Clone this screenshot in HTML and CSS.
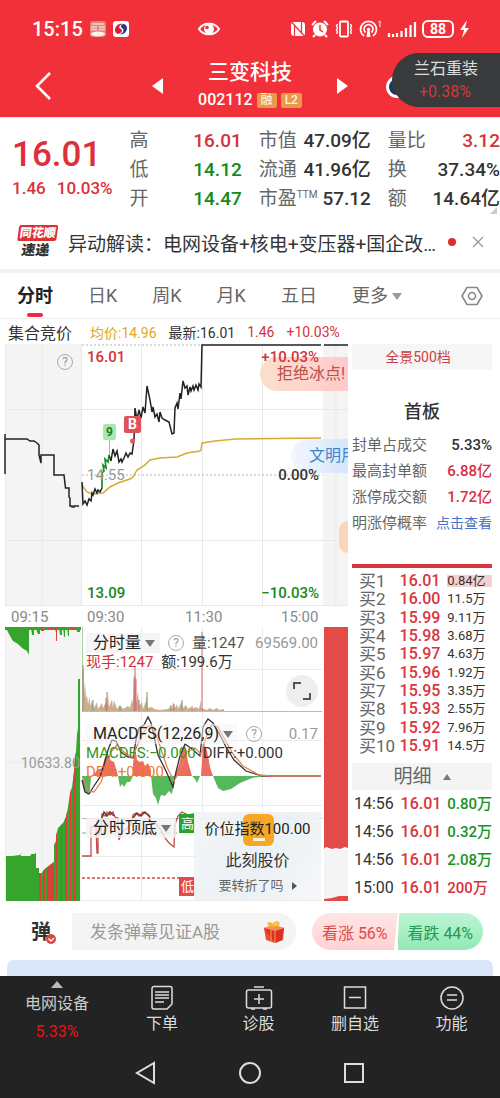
FILE: index.html
```html
<!DOCTYPE html>
<html lang="zh-CN">
<head>
<meta charset="utf-8">
<meta name="viewport" content="width=device-width, initial-scale=1">
<title>三变科技 002112</title>
<link rel="stylesheet" href="styles.css">
</head>
<body>
<header class="top">
  <div class="status">
    <div class="status-left">
      <span class="clock">15:15</span>
      <svg width="16" height="16" viewBox="0 0 16 16"><rect width="16" height="16" rx="3" fill="#d98a80"/><path d="M2 3h12M1 6h6M9 6h6M1 8.500h6M9 8.500h6" stroke="#f7d3c8" stroke-width="1.300"/><ellipse cx="8" cy="13" rx="7" ry="2.600" fill="#fff0df"/></svg>
      <svg width="16" height="16" viewBox="0 0 16 16"><rect width="16" height="16" rx="3" fill="#fff"/><path d="M2 9C2 5 6 2 10 3C6 4 5 7 8 8C10 9 9 12 5 13C3 12 2 11 2 9z" fill="#d5203c"/><path d="M14 7c0 4-4 7-7 6 3-1 5-4 2-6C7 6 8 3 11 3c2 1 3 2 3 4z" fill="#223a8c"/></svg>
    </div>
    <svg class="eye" width="24" height="18" viewBox="0 0 24 18"><path d="M2 9C6 2 18 2 22 9C18 16 6 16 2 9z" fill="none" stroke="#fff" stroke-width="2"/><circle cx="12" cy="9" r="5" fill="#fff"/><circle cx="10" cy="7.500" r="1.800" fill="#f23039"/></svg>
    <div class="status-right">
      <svg width="16" height="16" viewBox="0 0 16 16"><rect x="1" y="1" width="14" height="14" rx="3" fill="#fff"/><path d="M4.500 15V4.500L11.500 12V1M2 1.500L14 14.500" fill="none" stroke="#f23039" stroke-width="1.200"/></svg>
      <svg width="18" height="18" viewBox="0 0 18 18"><circle cx="9" cy="9.500" r="7" fill="#fff"/><path d="M1 5l4-4M17 5l-4-4M4 15l-2 2M14 15l2 2" stroke="#fff" stroke-width="2"/><path d="M9 5v5l3 2" fill="none" stroke="#f23039" stroke-width="1.500"/></svg>
      <svg width="20" height="18" viewBox="0 0 20 18"><rect x="6" y="1.500" width="8" height="15" rx="1" fill="none" stroke="#fff" stroke-width="1.800"/><path d="M3.500 4l-1 2 1 2-1 2 1 2-1 2M16.500 4l1 2-1 2 1 2-1 2 1 2" fill="none" stroke="#fff" stroke-width="1.400"/></svg>
      <svg width="23" height="18" viewBox="0 0 23 18"><g fill="none" stroke="#fff" stroke-width="1.700"><path d="M5 16A8 8 0 1 1 14 16"/><path d="M6.500 12.500A4.500 4.500 0 1 1 12.500 12.500"/></g><circle cx="9.500" cy="9.500" r="1.700" fill="#fff"/><path d="M8.500 10h2l1 7h-4z" fill="#fff"/><path d="M19.500 2l1.500-1v6" fill="none" stroke="#fff"/></svg>
      <svg width="30" height="17" viewBox="0 0 30 17"><path d="M2 16v-4M6 16v-3M10 16v-4M14.500 16V10M19 16V7M23.500 16V4M28 16V1" stroke="#fff" stroke-width="2.200"/></svg>
      <span class="battery">88</span>
      <svg width="11" height="18" viewBox="0 0 11 18"><path d="M8 0L1 10h4L3 18l7-10H6z" fill="#fff"/></svg>
    </div>
  </div>
  <div class="titlebar">
    <button class="back" aria-label="返回"><svg width="18" height="30" viewBox="0 0 18 30"><path d="M16 2L3 15l13 13" fill="none" stroke="#fff" stroke-width="2.600"/></svg></button>
    <button class="step" aria-label="上一只"><svg width="12" height="16" viewBox="0 0 12 16"><path d="M11 0v16L0 8z" fill="#fff"/></svg></button>
    <div class="stock">
      <h1>三变科技</h1>
      <div class="code">002112 <span class="tag">融</span><span class="tag">L2</span></div>
    </div>
    <button class="step" aria-label="下一只"><svg width="12" height="16" viewBox="0 0 12 16"><path d="M1 0v16L12 8z" fill="#fff"/></svg></button>
  </div>
  <i class="avatar"></i>
  <a class="float-pill" href="#"><span>兰石重装</span><span class="pill-rate">+0.38%</span></a>
</header>

<section class="quote">
  <div class="last"><strong>16.01</strong><div class="change"><span>1.46</span><span>10.03%</span></div></div>
  <dl><div><dt>高</dt><dd class="up">16.01</dd></div><div><dt>低</dt><dd class="down">14.12</dd></div><div><dt>开</dt><dd class="down">14.47</dd></div></dl>
  <dl><div><dt>市值</dt><dd>47.09亿</dd></div><div><dt>流通</dt><dd>41.96亿</dd></div><div><dt>市盈<sup>TTM</sup></dt><dd>57.12</dd></div></dl>
  <dl><div><dt>量比</dt><dd class="up">3.12</dd></div><div><dt>换</dt><dd>37.34%</dd></div><div><dt>额</dt><dd>14.64亿</dd></div></dl>
  <i class="corner"></i>
</section>

<section class="news">
  <div class="news-logo"><b>同花顺</b><em>速递</em></div>
  <p>异动解读：电网设备+核电+变压器+国企改革</p>
  <i class="dot"></i>
  <button aria-label="关闭"><svg width="12" height="12" viewBox="0 0 12 12"><path d="M1 1l10 10M11 1L1 11" stroke="#999" stroke-width="1.300"/></svg></button>
</section>

<nav class="tabs">
  <button class="active">分时</button><button>日K</button><button>周K</button><button>月K</button><button>五日</button><button>更多<i class="caret"></i></button>
  <button class="gear" aria-label="设置"><svg width="22" height="20" viewBox="0 0 22 20"><path d="M6 1.500h10L21 10l-5 8.500H6L1 10z" fill="none" stroke="#888" stroke-width="1.600" stroke-linejoin="round"/><circle cx="11" cy="10" r="3.500" fill="none" stroke="#888" stroke-width="1.600"/></svg></button>
</nav>

<div class="ticker"><b>集合竞价</b><span class="avg">均价:14.96</span><span>最新:16.01</span><span class="up">1.46</span><span class="up">+10.03%</span></div>

<main class="board">
  <div class="charts">
    <div class="price">
      <svg class="plot" viewBox="0 0 350 262" preserveAspectRatio="none">
        <path d="M5 0h76v262H5zM323 0h25v262h-25z" fill="#f4f4f5"/>
        <path d="M5 65.500H348M5 196.500H348M5 261.500H348M5.500 0V262M42 0V262M81.500 0V262M141.500 0V262M202.500 0V262M262.500 0V262M336 0V262" stroke="#e9e9eb" fill="none"/>
        <path d="M82 1H202M82 131H323" stroke="#b5b5b5" stroke-dasharray="2 2"/>
        <path d="M82 140L84 144L87 148L92 150L103 149L110 143L118 139L130 135L133 133L137 126L145 121L150 116L160 114L177 113L187 109L200 107L201 106L202 99L215 97L235 95L321 94" fill="none" stroke="#d8a933" stroke-width="1.500"/>
        <path d="M5 130V90V95H27L30 97L34 97L37 99L39 101V111L41 119V111H54V131H64L65.500 144H69V153L70 154V162H72V163H74V162H79" fill="none" stroke="#222" stroke-width="1.500"/>
        <path d="M82 138L83 160L85 157L87 161L89 155L91 157L92 149L93 151L95 145L97 149L98 146L100 148L102 144M109 111L111 117L113 105L115 112L117 107L119 118L121 115L122 118L124 114L126 109L128 113L130 109L132 110L134 96L135 64L137 76L139 66L141 74L143 63L145 69L147 42L150 56L152 68L153 63L155 73L157 70L159 78L160 68L162 74L165 76L169 78L172 90L174 89L175 64L177 59L178 65L180 49L181 55L183 37L185 44L187 42L188 51L190 43L191 47L193 42L194 46L196 41L198 46L199 40L201 43L202 1H321M324 1H348" fill="none" stroke="#222" stroke-width="1.500"/>
        <path d="M102 144V129L104 127L103 121L106 124L105 115L108 118L109 111" fill="none" stroke="#12901d" stroke-width="1.700"/>
        <path d="M109.500 94V111" stroke="#8fce95"/><circle cx="132.500" cy="97" r="2.500" fill="#e25762"/>
      </svg>
      <span class="help price-help">?</span>
      <span class="bullet bullet-red">拒绝冰点!</span><span class="bullet bullet-blue">文明用</span><span class="bullet bullet-orange"></span>
      <div class="scale scale-left"><span class="up">16.01</span><span class="mid">14.55</span><span class="down">13.09</span></div>
      <div class="scale scale-right"><span class="up">+10.03%</span><span>0.00%</span><span class="down">−10.03%</span></div>
      <span class="pin pin-nine">9</span><span class="pin pin-buy">B</span>
    </div>
    <div class="hours"><span>09:15</span><span>09:30</span><span>11:30</span><span>15:00</span></div>
    <div class="lower">
      <svg class="plot" viewBox="0 0 350 274" preserveAspectRatio="none">
        <defs><clipPath id="auction"><path d="M6 274V229H12L20 228V226L21 229H30V228L31 229V227H35V226H36V241H39V246H41V247L43 244L46 241L50 238L54 235V218L56 214V209L58 201L63 196L66 190L68 180L70 166L72 160L74 145L75 130L76 125L77 107L78 101L78 52H80V274z"/></clipPath></defs>
        <path d="M5 0h76v274H5z" fill="#f4f4f5"/><path d="M5.500 0V274M42.500 0V274M141.500 0V274M202.500 0V274M262.500 0V274M82 42.500H322M5 135H81M82 113.500H322M82 178.500H322M82 229.500H322M5 273.500H322" fill="none" stroke="#ececee"/>
        <path d="M82 84.500H322M82 191.500H322" stroke="#bbb"/>
        <path d="M5 0H81V3H5zM6 1H29V28L27 24L22 21L18 17L13 14L10 9zM31 0h3v8h-2zM35 0h5v7h-2zM59 0h3v8h-2zM63 0h2v10h-1zM67 0h2v9h-1zM76 0h4v5h-3z" fill="#36a52b"/><path d="M41 0h3v4h-3zM48 0h5v3h-5zM54 0h3v14h-1v-9zM70 0h5v3h-5z" fill="#dc453f"/>
        <g clip-path="url(#auction)"><path d="M5 0H81V274H5z" fill="#36a52b"/><path d="M39 200h2v74h-2zM43 200h3v74h-3zM47 200h7v74h-7zM56 180h1v94h-1zM61 180h1v94h-1zM65 170h2v104h-2zM70 150h1v124h-1zM73 110h3v164h-3z" fill="#e33a3c"/><path d="M45.500 200V274M50 200V274" stroke="#a66b30" stroke-width=".7"/></g>
        <path d="M82.500 0V84" stroke="#a5d3a0"/>
        <path d="M82 84V40H83L84 45V66L85 55L86 72L87 68L88 77L90 69V79L92 73L94 81L97 75L98 82L102 76L103 81L106 75V70L107 79L108 65L109 80L112 72L113 81L114 73L117 82L120 78L123 82L128 79L130 81L132 72L133 77L134 58L135 44L136 56V77L138 64L139 79L142 75L143 82L146 74L147 68L148 81L152 80L154 82L160 83L168 82L171 79L172 82L173 75L175 81L177 77L178 82L182 74L183 81L186 78L188 82L190 80L192 82L196 80L199 82L201 73V84V81L207 83L210 81L213 83L217 81L219 83L224 82V84z" fill="#caae90"/><path d="M83 84V38M93 84V73M107 84V65M120 84V79M147 84V65M171 84V78M182 84V73" stroke="#79a163"/><path d="M106 84V71M134 84V50M135 84V40M136 84V52M139 84V73M174 84V77M192 84V79M202 84V5" stroke="#cd6a68"/>
        <path d="M93 149L97 143L102 141L105 130L108 126L110 133L114 135L117 145L118 149zM133 149V137L135 120L137 133L140 135L143 134L145 139L148 136L151 143V149zM175 149L179 138L183 120L185 118L188 135L192 149zM201 149L203 115L207 124L210 140L213 149z" fill="#ed6c60"/>
        <path d="M82 149L84 163L88 168L90 163L91 149zM118 149L120 160L122 157L124 160L127 155L130 155L133 149zM151 149L153 167L156 171L158 178L161 168L165 169L169 164L172 167L175 149zM192 149L195 152L197 156L200 149zM213 149L218 161L223 164L231 162L240 156L252 151L264 149z" fill="#55b95b"/>
        <path d="M82 153L85 165L89 167L94 159L100 150L104 138L108 123L112 113L116 114L121 125L128 130L133 131L136 113L139 101L144 98L148 90L151 96L154 109L158 128L166 144L173 160L176 145L180 129L185 117L192 122L200 129L203 100L208 92L213 96L219 106L226 120L234 133L246 144L262 149H321" fill="none" stroke="#333" stroke-width="1.300"/>
        <path d="M83 150L88 164L94 165L101 155L106 141L111 125L117 118L124 125L132 131L137 119L142 108L148 99L153 100L160 119L167 140L174 154L180 144L187 125L195 121L201 127L206 110L212 98L218 100L225 113L233 127L243 139L259 148L271 149H321" fill="none" stroke="#e48159" stroke-width="1.300"/>
        <path d="M82 206H180" stroke="#64ba67" stroke-dasharray="4 3"/><path d="M82 251H180" stroke="#d34c50" stroke-width="1.300" stroke-dasharray="3 2"/>
        <path d="M82 229H91V200L95 198L96 201L97 226H98V208L101 205L102 187L105 189L107 185L110 188L113 185L115 190L118 191L119 213L122 205L125 203L131 198L133 188L136 186L139 189L143 185L149 188L151 195L155 195L160 202L165 211L169 216L174 220L175 197L178 189L182 185L188 188L194 187" fill="none" stroke="#c44b4b" stroke-width="1.300"/><path d="M102 191L104 185L107 189L110 185L114 189M133 191L137 186L141 189L145 185L150 190" fill="none" stroke="#713636" stroke-width="1.500"/><path d="M102 191H116L117 207L106 205zM133 191H151V204L137 203z" fill="#f5a6a6" opacity=".45"/>
        <path d="M324 0H348V221L345 220L340 222L336 221L332 222L326 220L324 222z" fill="#e34b48"/><path d="M324 222H348V273H324z" fill="#f4f4f5"/><path d="M324 272L332 271L339 269H348V274H324z" fill="#e34b48"/>
      </svg>
      <div class="auction-label">10633.80</div>
      <div class="panels">
        <section class="volume">
          <div class="line"><button class="metric">分时量<i class="caret"></i></button><span class="help">?</span><span class="gray-dark">量:1247</span><span class="axis">69569.00</span></div>
          <div class="line second"><span class="up">现手:1247</span><span>额:199.6万</span></div>
          <button class="expand" aria-label="展开"><svg width="18" height="18" viewBox="0 0 18 18"><path d="M1 7V1h7M17 11v6h-7" fill="none" stroke="#555" stroke-width="2"/></svg></button>
        </section>
        <section class="macd">
          <div class="line"><button class="metric">MACDFS(12,26,9)<i class="caret"></i></button><span class="help">?</span><span class="axis">0.17</span></div>
          <div class="macd-values"><span class="green">MACDFS:−0.000</span><span>DIFF:+0.000</span></div>
          <div class="orange">DEA:+0.000</div>
        </section>
        <section class="extremes">
          <button class="metric">分时顶底<i class="caret"></i></button>
          <i class="flag flag-high">高</i><i class="flag flag-low">低</i>
          <a class="popup" href="#"><i class="popup-icon"></i><span class="index">价位指数100.00</span><b>此刻股价</b><small>要转折了吗<i class="play"></i></small></a>
        </section>
      </div>
    </div>
  </div>

  <aside class="depth">
    <a class="all-depth" href="#">全景500档</a>
    <h2>首板</h2>
    <dl class="seal"><div><dt>封单占成交</dt><dd>5.33%</dd></div><div><dt>最高封单额</dt><dd class="red">6.88亿</dd></div><div><dt>涨停成交额</dt><dd class="red">1.72亿</dd></div><div><dt>明涨停概率</dt><dd><a href="#">点击查看</a></dd></div></dl>
    <table class="bids">
      <tr class="first"><th scope="row">买1</th><td>16.01</td><td>0.84亿</td></tr><tr><th scope="row">买2</th><td>16.00</td><td>11.5万</td></tr><tr><th scope="row">买3</th><td>15.99</td><td>9.11万</td></tr><tr><th scope="row">买4</th><td>15.98</td><td>3.68万</td></tr><tr><th scope="row">买5</th><td>15.97</td><td>4.63万</td></tr><tr><th scope="row">买6</th><td>15.96</td><td>1.92万</td></tr><tr><th scope="row">买7</th><td>15.95</td><td>3.35万</td></tr><tr><th scope="row">买8</th><td>15.93</td><td>2.55万</td></tr><tr><th scope="row">买9</th><td>15.92</td><td>7.96万</td></tr><tr><th scope="row">买10</th><td>15.91</td><td>14.5万</td></tr>
    </table>
    <button class="detail">明细<i class="caret-up"></i></button>
    <table class="trades">
      <tr><td>14:56</td><td>16.01</td><td class="down">0.80万</td></tr><tr><td>14:56</td><td>16.01</td><td class="down">0.32万</td></tr><tr><td>14:56</td><td>16.01</td><td class="down">2.08万</td></tr><tr><td>15:00</td><td>16.01</td><td class="up">200万</td></tr>
    </table>
  </aside>
</main>

<section class="social">
  <button class="danmu" aria-label="弹幕">弹<svg width="10" height="10" viewBox="0 0 10 10"><circle cx="5" cy="5" r="5" fill="#d94642"/><path d="M2.500 4.500L5 7l3-3" fill="none" stroke="#fff" stroke-width="1.300"/></svg></button>
  <div class="compose"><input type="text" placeholder="发条弹幕见证A股" aria-label="发条弹幕"><svg width="22" height="24" viewBox="0 0 22 24"><path d="M1 8l10-3 10 3-1 12-8 3-9-3z" fill="#ed4b34"/><path d="M1 8l11 3 9-3-2 12-7 3z" fill="#d83225"/><path d="M1 8l10-3 10 3-9 3z" fill="#fb8c5c"/><path d="M10 6C4 6 4 0 10 5c4-6 10 0 1 1" fill="none" stroke="#f5b738" stroke-width="2"/><path d="M8 10v11M12 11v12" stroke="#f8a23e"/></svg></div>
  <div class="votes"><button class="vote-up">看涨 56%</button><button class="vote-down">看跌 44%</button></div>
</section>
<div class="card-peek"></div>

<footer class="bottom">
  <nav class="actions">
    <a class="sector" href="#"><i class="sector-caret"></i><span>电网设备</span><span class="sector-rate">5.33%</span></a>
    <a href="#"><svg width="24" height="26" viewBox="0 0 24 26"><path d="M4 1.500h16a2 2 0 0 1 2 2V19l-5 5H4a2 2 0 0 1-2-2V3.500a2 2 0 0 1 2-2zM5 7h14M5 10h14M5 13h14M5 17h9"/></svg>下单</a>
    <a href="#"><svg width="28" height="26" viewBox="0 0 28 26"><rect x="1.500" y="5" width="25" height="18" rx="2"/><path d="M9 2h10M14 9v10M9 14h10M6 24h4M18 24h4"/></svg>诊股</a>
    <a href="#"><svg width="24" height="26" viewBox="0 0 24 26"><path d="M1.500 2h21v21h-21zM6 12.500h12"/></svg>删自选</a>
    <a href="#"><svg width="26" height="26" viewBox="0 0 26 26"><circle cx="13" cy="13" r="11"/><path d="M8 10h10M8 15h10"/></svg>功能</a>
  </nav>
  <nav class="system">
    <button aria-label="后退"><svg width="24" height="24" viewBox="0 0 24 24"><path d="M20 2v20L3 12z"/></svg></button>
    <button aria-label="主屏幕"><svg width="24" height="24" viewBox="0 0 24 24"><circle cx="12" cy="12" r="10"/></svg></button>
    <button aria-label="最近任务"><svg width="24" height="24" viewBox="0 0 24 24"><rect x="3" y="3" width="18" height="18"/></svg></button>
  </nav>
</footer>
</body>
</html>
```
FILE: styles.css
```css
* { box-sizing: border-box; }
body { margin: 0; background: #fff; color: #333; font-family: Roboto, "Noto Sans CJK SC", sans-serif; font-size: 16px; overflow-x: hidden; }
button { border: 0; padding: 0; background: none; color: inherit; font: inherit; }
a { color: inherit; text-decoration: none; }
h1, h2, p, dl, dd { margin: 0; }
i, em { font-style: normal; }
svg { display: block; flex: none; }
.up { color: #d5313a; }
.down { color: #128a1c; }

.top { position: relative; height: 117px; background: #f23039; color: #fff; }
.status { display: grid; grid-template-columns: auto 1fr auto; align-items: center; height: 58px; padding: 0 30px 0 32px; }
.status-left, .status-right { display: flex; align-items: center; gap: 7px; }
.status-right { justify-content: flex-end; gap: 5px; }
.clock { font-size: 20px; font-weight: 500; }
.eye { justify-self: center; }
.battery { border: 2px solid #fff; border-radius: 6px; width: 32px; height: 18px; line-height: 14px; text-align: center; font-size: 14px; font-weight: 700; }
.titlebar { display: grid; grid-template-columns: 84fr 82fr 168fr 166fr; align-items: center; height: 56px; }
.back { justify-self: start; padding-left: 34px; }
.step { justify-self: end; padding-right: 2px; }
.stock { text-align: center; }
.stock + .step { justify-self: start; padding: 0 0 0 2px; }
.stock h1 { font-size: 21px; line-height: 28px; font-weight: 500; }
.code { display: flex; justify-content: center; align-items: center; gap: 4px; font-size: 16px; line-height: 28px; font-weight: 500; }
.tag { background: #e79a4c; border-radius: 2px; padding: 0 4px; line-height: 15px; font-size: 12px; color: #fff1dc; }
.avatar { position: absolute; right: 84px; top: 76px; width: 30px; height: 22px; border: 3px solid #fff; border-radius: 12px; background: #173b60; }
.float-pill { position: absolute; right: 0; top: 53px; width: 108px; height: 54px; padding-left: 22px; border-radius: 27px 0 0 27px; background: #383a3b; display: flex; flex-direction: column; justify-content: center; font-size: 16px; line-height: 23px; color: #ddd; }
.pill-rate { color: #d9363d; padding-left: 5px; }

.quote { position: relative; display: grid; grid-template-columns: 101fr 112fr 112fr 112fr; gap: 17px; height: 98px; padding: 8px 0 0 10px; border-top: 1px solid #fde8e8; }
.last { color: #dd3038; white-space: nowrap; padding: 9px 0 0 2px; }
.last strong { display: block; font-size: 35px; line-height: 40px; font-weight: 500; }
.change { display: flex; gap: 11px; font-size: 17px; line-height: 26px; font-weight: 500; }
.quote dl > div { display: flex; justify-content: space-between; line-height: 29px; font-size: 19px; white-space: nowrap; }
.quote dt { color: #666; }
.quote dd { font-weight: 500; }
.quote sup { font-size: 10px; line-height: 0; }
.corner { position: absolute; right: 3px; bottom: 1px; border-left: 7px solid transparent; border-bottom: 7px solid #ccc; }

.news { display: flex; align-items: center; height: 58px; padding: 0 16px 0 17px; border-bottom: 4px solid #f3f3f3; }
.news-logo { width: 39px; text-align: center; margin-right: 12px; flex: none; transform: skewX(-8deg); }
.news-logo b { display: block; background: #dd3035; color: #fff; font-size: 12px; line-height: 16px; font-weight: 900; border-radius: 2px; }
.news-logo em { display: block; font-size: 14px; line-height: 18px; font-weight: 900; }
.news p { flex: 1; font-size: 19px; overflow: hidden; white-space: nowrap; text-overflow: ellipsis; }
.dot { width: 8px; height: 8px; border-radius: 50%; background: #e32b2d; margin: 0 16px 0 6px; }

.tabs { display: flex; align-items: center; gap: 35px; height: 46px; padding: 0 17px; border-bottom: 1px solid #eee; font-size: 18px; color: #666; }
.tabs button { position: relative; line-height: 42px; white-space: nowrap; }
.tabs .active { font-weight: 700; color: #222; }
.active::after { content: ""; position: absolute; left: 10px; bottom: 0; width: 16px; height: 4px; border-radius: 2px; background: #ed2947; }
.caret { display: inline-block; border: 5px solid transparent; border-top: 7px solid #777; border-bottom: 0; margin-left: 4px; vertical-align: middle; }
.tabs .caret { border-top-color: #999; }
.tabs .gear { margin-left: auto; }
.ticker { display: flex; align-items: center; height: 25px; padding: 0 8px; font-size: 14px; white-space: nowrap; gap: 12px; }
.ticker b { font-size: 16px; font-weight: 400; margin-right: 6px; }
.ticker .avg { color: #dda922; }

.board { display: grid; grid-template-columns: 7fr 3fr; align-items: start; }
.charts { min-width: 0; }
.plot { position: absolute; inset: 0; width: 100%; height: 100%; }
.price { position: relative; height: 262px; overflow: hidden; }
.help { display: inline-block; width: 16px; height: 16px; border: 1px solid #aaa; border-radius: 50%; color: #999; font-size: 12px; line-height: 14px; text-align: center; flex: none; }
.price-help { position: absolute; left: 57px; top: 10px; }
.scale { position: absolute; top: 3px; bottom: 3px; display: flex; flex-direction: column; justify-content: space-between; font-size: 15px; line-height: 20px; font-weight: 500; }
.scale-left { left: 87px; }
.scale-right { right: 31px; text-align: right; }
.mid { color: #999; font-weight: 400; }
.pin { position: absolute; text-align: center; border-radius: 2px; font-weight: 700; }
.pin-nine { left: 103px; top: 80px; width: 13px; background: #a8e7b0; color: #198323; font-size: 12px; line-height: 16px; }
.pin-buy { left: 124px; top: 72px; width: 17px; background: #e15059; color: #fff; font-size: 14px; line-height: 17px; }
.bullet { position: absolute; right: 2px; height: 34px; border-radius: 17px 0 0 17px; font-size: 16px; line-height: 34px; white-space: nowrap; overflow: hidden; }
.bullet-red { top: 13px; width: 88px; padding-left: 17px; color: #b9504c; background: linear-gradient(90deg, #fbdac3dd, #ffc4c4dd); }
.bullet-blue { top: 95px; width: 57px; padding-left: 18px; color: #3d86cc; background: linear-gradient(90deg, #f0f1ffbb, #cce4fbcc); }
.bullet-orange { top: 177px; width: 9px; height: 32px; background: #fad5b8; }
.hours { display: grid; grid-template-columns: 76fr 98fr 96fr 40fr; padding: 0 29px 0 11px; height: 21px; line-height: 22px; font-size: 15px; color: #888; }
.lower { position: relative; display: grid; grid-template-columns: 82fr 240fr 28fr; height: 274px; }
.auction-label { position: relative; padding: 126px 0 0 21px; line-height: 20px; font-size: 14px; color: #999; }
.panels { position: relative; min-width: 0; display: grid; grid-template-rows: 85fr 99fr 90fr; }
.panels section { position: relative; padding-left: 4px; min-width: 0; white-space: nowrap; }
.volume { padding-top: 6px; }
.line { display: flex; align-items: center; gap: 8px; line-height: 20px; padding-right: 4px; }
.metric { background: #f3f3f4cc; padding: 0 5px 0 7px; font-size: 16px; line-height: 20px; border-radius: 2px; color: #222; }
.axis { margin-left: auto; color: #999; font-size: 15px; }
.gray-dark { color: #555; font-size: 15px; }
.second { font-size: 15px; line-height: 18px; }
.expand { position: absolute; right: 4px; bottom: 5px; width: 32px; height: 32px; border-radius: 50%; background: #ebebebdd; display: grid; place-items: center; }
.macd { padding-top: 12px; font-size: 15px; line-height: 19px; }
.macd .metric { background: #f3f3f480; }
.macd-values { display: flex; gap: 7px; }
.green { color: #35951e; }
.orange { color: #f07a38; }
.extremes { padding-top: 7px; }
.flag { position: absolute; left: 97px; width: 16px; font-size: 13px; line-height: 19px; color: #fff; padding-left: 2px; }
.flag-high { top: 3px; background: #26a52d; }
.flag-low { top: 66px; background: #e2484c; }
.popup { position: absolute; inset: 1px 1px 1px 112px; background: linear-gradient(120deg, #f4f4f5ee, #e9f0f4ee 55%, #f7f7f8ee); display: flex; flex-direction: column; align-items: center; padding-top: 5px; }
.popup-icon { position: absolute; top: 2px; left: 49px; width: 31px; height: 32px; border-radius: 6px; background: #f8a725; }
.popup-icon::after { content: ""; position: absolute; left: 10px; bottom: 5px; width: 12px; height: 3px; background: #fff3d0; }
.index { position: relative; font-size: 15px; line-height: 24px; color: #222; }
.popup b { font-size: 16px; line-height: 36px; font-weight: 400; padding-top: 2px; }
.popup small { font-size: 13px; line-height: 14px; color: #666; }
.play { display: inline-block; border: 4px solid transparent; border-left: 5px solid #555; border-right: 0; margin-left: 8px; }

.depth { padding: 0 8px 0 2px; min-width: 0; white-space: nowrap; }
.all-depth { display: block; background: #f6f6f7; color: #ce3d42; font-size: 14px; line-height: 26px; text-align: center; padding-right: 8px; }
.depth h2 { font-size: 18px; line-height: 30px; font-weight: 500; text-align: center; margin: 27px 0 5px; }
.seal > div { display: flex; justify-content: space-between; line-height: 26px; font-size: 15px; }
.seal dt { color: #666; }
.seal dd { font-weight: 500; }
.seal .red { color: #db2d42; }
.seal a { color: #4274ca; font-weight: 400; font-size: 14px; }
.depth table { width: 100%; border-collapse: separate; border-spacing: 0; table-layout: fixed; }
.depth th, .depth td { padding: 0; text-align: left; }
.depth .bids { height: 191px; margin-top: 28px; padding-top: 4px; border-top: 4px solid #d9373f; }
.bids tr { line-height: 18px; }
.depth .bids th { width: 34%; font-size: 17px; font-weight: 400; color: #666; padding-left: 7px; }
.bids td { font-size: 13px; }
.bids td:nth-child(2) { width: 34%; font-size: 16px; font-weight: 500; color: #dc343d; }
.bids .first td:last-child { background: linear-gradient(#f8cfd1, #f8cfd1) center / 100% 12px no-repeat; }
.detail { display: flex; justify-content: center; align-items: center; gap: 11px; width: 100%; height: 27px; margin: 8px 0 0; background: #f4f4f5; color: #666; font-size: 19px; line-height: 26px; }
.caret-up { border: 4px solid transparent; border-bottom: 6px solid #777; border-top: 0; }
.trades { height: 112px; }
.trades tr { line-height: 22px; }
.trades td { font-size: 15px; font-weight: 500; }
.trades td:first-child { width: 34%; font-size: 16px; font-weight: 400; padding-left: 2px; }
.trades td:nth-child(2) { width: 34%; font-size: 16px; color: #dc343d; padding-left: 1px; }
.trades .down { color: #169224; }

.social { display: flex; align-items: center; height: 37px; margin-top: 11px; padding-right: 17px; }
.danmu { position: relative; width: 72px; padding-left: 10px; font-size: 20px; font-weight: 700; line-height: 30px; }
.danmu svg { position: absolute; left: 46px; bottom: 3px; }
.compose { flex: 1; min-width: 0; height: 37px; display: flex; align-items: center; padding: 0 11px 0 18px; background: #f4f4f4; border-radius: 0 18px 18px 0; }
.compose input { flex: 1; min-width: 0; border: 0; padding: 0; background: none; font: inherit; font-size: 17px; }
.compose input::placeholder { color: #999; opacity: 1; }
.votes { display: grid; grid-template-columns: 1fr 1fr; width: 171px; height: 37px; margin-left: 16px; border-radius: 19px; overflow: hidden; font-size: 16px; }
.vote-up { color: #d94b48; background: linear-gradient(#ffe5e5, #ffd2d2); clip-path: polygon(0 0, 100% 0, 96% 100%, 0 100%); }
.vote-down { color: #239858; background: linear-gradient(#bdf5d4, #92e9b6); clip-path: polygon(2% 0, 100% 0, 100% 100%, 0 100%); }
.card-peek { height: 16px; margin: 10px 7px 0; border-radius: 7px 7px 0 0; background: #dae6fa; }

.bottom { background: #232323; color: #ddd; }
.actions { display: grid; grid-template-columns: 114fr 96fr 97fr 96fr 97fr; height: 70px; }
.actions a { display: flex; flex-direction: column; align-items: center; padding-top: 9px; font-size: 16px; line-height: 26px; }
.bottom svg { fill: none; stroke: #ddd; stroke-width: 1.5; }
.actions .sector { padding-top: 5px; line-height: 32px; color: #ccc; }
.sector-caret { border: 6px solid transparent; border-bottom: 7px solid #bbb; border-top: 0; }
.sector span { height: 28px; }
.sector .sector-rate { color: #ed1111; }
.system { display: grid; grid-template-columns: repeat(3, 104fr); padding: 0 94px; height: 53px; }
.system button { display: grid; place-items: center; }
.system svg { stroke-width: 2; }
```
